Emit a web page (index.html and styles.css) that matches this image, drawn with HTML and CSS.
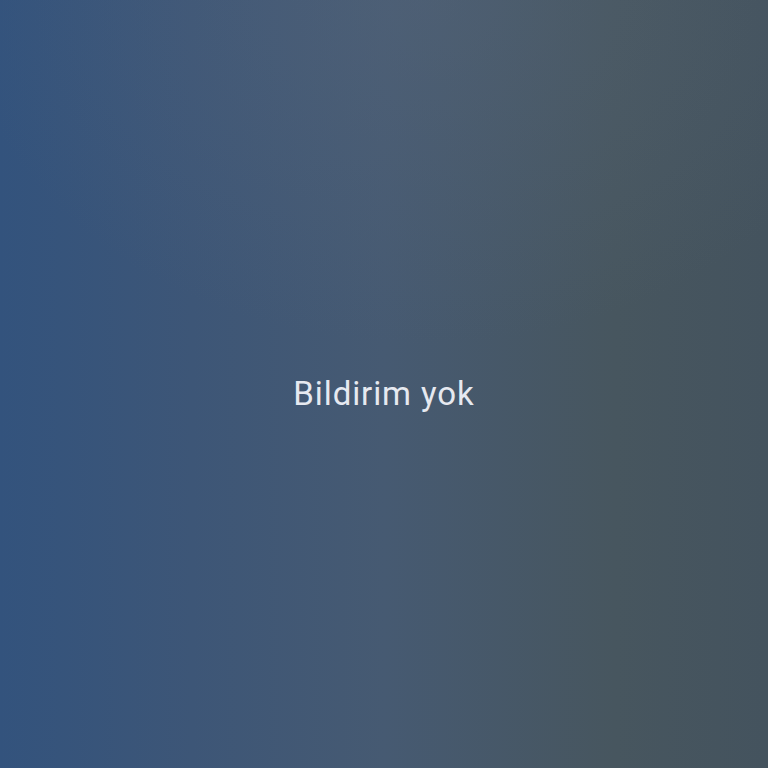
FILE: index.html
```html
<!DOCTYPE html>
<html lang="tr">
<head>
    <meta charset="UTF-8">
    <meta name="viewport" content="width=device-width, initial-scale=1.0">
    <title>Bildirimler</title>
    <link rel="stylesheet" href="styles.css">
</head>
<body>
    <div class="shade">
        <p class="empty">Bildirim yok</p>
    </div>
</body>
</html>
```

FILE: styles.css
```css
* {
    margin: 0;
    padding: 0;
    box-sizing: border-box;
}

body {
    font-family: 'Roboto', 'Noto Sans', sans-serif;
}

.shade {
    width: 100%;
    height: 100vh;
    display: flex;
    justify-content: center;
    align-items: center;
    background:
        radial-gradient(ellipse 60% 45% at 55% 0%, rgba(90, 105, 125, 0.35), rgba(90, 105, 125, 0)),
        linear-gradient(to right, #33537d 0%, #3d5677 25%, #465a72 50%, #47565f 80%, #44535e 100%);
}

.empty {
    color: #e6e9f0;
    font-size: 33px;
    line-height: 40px;
    letter-spacing: 0.9px;
    margin-top: 20px;
}
```
